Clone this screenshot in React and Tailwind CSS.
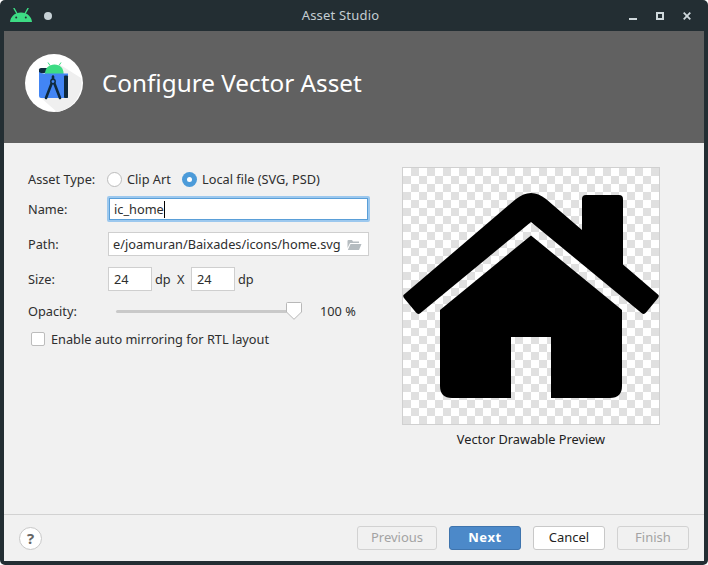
import React from "react";

function AndroidHead({ className }) {
  return (
    <svg className={className} viewBox="0 0 22 14" fill="#3ddc84">
      <path d="M0 14 C0.3 8.6 5 4.4 11 4.4 C17 4.4 21.7 8.6 22 14 Z" />
      <path d="M4 0.3 L7.2 6 M18 0.3 L14.8 6" stroke="#3ddc84" strokeWidth="1.4" strokeLinecap="round" />
      <circle cx="6.2" cy="9.6" r="1" fill="#232e33" />
      <circle cx="15.8" cy="9.6" r="1" fill="#232e33" />
    </svg>
  );
}

function StudioLogo() {
  return (
    <svg className="w-[58px] h-[58px] shrink-0" viewBox="0 0 58 58">
      <circle cx="29" cy="29" r="29" fill="#fff" />
      <path d="M34 10 L56 24 A29 29 0 0 1 32 58 L16 44 Z" fill="#efefef" />
      <path d="M14 20 L14 15.5 Q14 14 16 14 L24 14 L24 18 Z" fill="#0f2a3d" />
      <path d="M20 20 C20 14 24 10.5 29.5 10.5 C35 10.5 38.6 14 38.6 20 Z" fill="#3ddc84" />
      <path d="M23 8.5 L25 11.5 M36 8.5 L34 11.5" stroke="#3ddc84" strokeWidth="1" />
      <path d="M14 18 Q17 20 20 19.5 L43 19.5 L43 44 L16 44 Q14 44 14 42 Z" fill="#4285f4" />
      <path d="M39 22.5 Q39 21.5 40 21.5 L42 21.5 Q43 21.5 43 22.5 L43 43 Q43 44 42 44 L40 44 Q39 44 39 43 Z" fill="#0f2a3d" />
      <circle cx="28" cy="27.5" r="2.2" fill="none" stroke="#0f2a3d" strokeWidth="1.5" />
      <path d="M28 22.5 L28 25 M26.4 30 L21 44 M29.6 30 L35 44" stroke="#0f2a3d" strokeWidth="2.6" strokeLinecap="round" fill="none" />
    </svg>
  );
}

function House() {
  return (
    <svg className="w-[256px] h-[256px] block" viewBox="403 168 256 256" fill="#000">
      <path d="M403.5 295 Q402.8 296.5 404 298 L416 312.6 Q418 315 420.5 313 L531 222 L641.5 313 Q644 315 646 312.6 L658 298 Q659.2 296.5 658.5 295 L623 264.5 L623 199 Q623 195 619 195 L586 195 Q582 195 582 199 L582 230 L546 199 Q531 187 516 199 Z" />
      <path d="M531 235.5 L622 310 L622 386 Q622 398 610 398 L551 398 L551 337 L511 337 L511 398 L452 398 Q440 398 440 386 L440 310 Z" />
    </svg>
  );
}

function Btn({ children, kind }) {
  const base = "h-[24px] flex items-center justify-center rounded-[3px] border text-[13px] ";
  if (kind === "primary")
    return <div className={base + "w-[72px] bg-[#4c89c9] border-[#3f74ad] text-white font-bold tracking-[0.6px]"}>{children}</div>;
  if (kind === "normal")
    return <div className={base + "w-[72px] bg-white border-[#c8c8c8] text-[#1f1f1f]"}>{children}</div>;
  return <div className={base + "border-[#d2d2d2] text-[#a3a3a3] " + (children === "Previous" ? "w-[80px]" : "w-[72px]")}>{children}</div>;
}

export default function App() {
  return (
    <div className="w-[708px] h-[565px] bg-white overflow-hidden">
      <div className="w-full h-full bg-[#232e33] rounded-[5px] px-[4px] pb-[4px] flex flex-col font-['Noto_Sans','Open_Sans',sans-serif] text-[12.75px] text-[#2e2e2e] overflow-hidden">
        {/* Title bar */}
        <div className="h-[31px] shrink-0 flex items-center -mx-[4px] pl-[10px] pr-[17px] relative">
          <AndroidHead className="w-[22px] h-[14px] -mt-[1px]" />
          <div className="w-[8px] h-[8px] rounded-full bg-[#c7d1d6] ml-[12px]" />
          <div className="flex-1 text-center text-[13px] text-[#c3cdd2] tracking-[0.2px]">Asset Studio</div>
          <div className="flex items-center gap-[19px]">
            <svg className="w-[8px] h-[8px]" viewBox="0 0 8 8"><rect x="0" y="6" width="8" height="2" fill="#cfd8dc" /></svg>
            <svg className="w-[8px] h-[8px]" viewBox="0 0 8 8"><rect x="1" y="1" width="6" height="6" fill="none" stroke="#cfd8dc" strokeWidth="2" /></svg>
            <svg className="w-[8px] h-[8px]" viewBox="0 0 8 8"><path d="M0.7 0.7 L7.3 7.3 M7.3 0.7 L0.7 7.3" stroke="#cfd8dc" strokeWidth="1.8" /></svg>
          </div>
        </div>
        {/* Header */}
        <div className="h-[112px] shrink-0 bg-[#616161] flex items-center pl-[21px] pb-[8px]">
          <StudioLogo />
          <div className="ml-[19px] text-[24.3px] text-white leading-none">Configure Vector Asset</div>
        </div>
        {/* Body */}
        <div className="flex-1 bg-[#f1f1f1] flex flex-col min-h-0">
          <div className="h-[371px] shrink-0 flex pt-[24px] pl-[24px]">
            {/* Form */}
            <div className="w-[374px] shrink-0 flex flex-col">
              <div className="h-[25px] flex items-center">
                <div className="w-[79px]">Asset Type:</div>
                <div className="w-[15px] h-[15px] rounded-full bg-white border border-[#bcbcbc]" />
                <div className="ml-[5px] w-[50px]">Clip Art</div>
                <div className="w-[15px] h-[15px] rounded-full bg-[#4c9bd9] flex items-center justify-center ml-[5px]">
                  <div className="w-[5px] h-[5px] rounded-full bg-white" />
                </div>
                <div className="ml-[5px]">Local file (SVG, PSD)</div>
              </div>
              <div className="h-[26px] mt-[4px] flex items-center">
                <div className="w-[79px] pt-[2px]">Name:</div>
                <div className="w-[263px] h-[26px] bg-white border-2 border-[#9cc8ee] rounded-[2px] flex items-center pl-[5px] shadow-[inset_0_0_0_1px_#5a9fd8]">
                  <span className="pt-[2px]">ic_home</span>
                  <span className="inline-block w-px h-[17px] bg-black" />
                </div>
              </div>
              <div className="h-[24px] mt-[10px] flex items-center">
                <div className="w-[80px] pt-[2px]">Path:</div>
                <div className="w-[261px] h-[24px] bg-white border border-[#cfcfcf] flex items-center pl-[4px] pr-[6px] pt-[2px] justify-between">
                  <span className="whitespace-nowrap">e/joamuran/Baixades/icons/home.svg</span>
                  <svg className="w-[15px] h-[12px] shrink-0" viewBox="0 0 15 12">
                    <path d="M0.5 2 Q0.5 1 1.5 1 L5 1 L6 2.5 L12 2.5 L12 4 L3 4 L0.5 9 Z" fill="#b5bcc0" />
                    <path d="M3.5 5 L14.5 5 L12 11 L0.8 11 Z" fill="#b5bcc0" />
                  </svg>
                </div>
              </div>
              <div className="h-[24px] mt-[11px] flex items-center">
                <div className="w-[80px] pt-[2px]">Size:</div>
                <div className="w-[44px] h-[24px] bg-white border border-[#cfcfcf] flex items-center pl-[5px] pt-[2px]">24</div>
                <div className="ml-[3px] w-[22px] pt-[2px]">dp</div>
                <div className="w-[14px] pt-[2px]">X</div>
                <div className="w-[44px] h-[24px] bg-white border border-[#cfcfcf] flex items-center pl-[5px] pt-[2px]">24</div>
                <div className="ml-[3px] pt-[2px]">dp</div>
              </div>
              <div className="h-[24px] mt-[8px] flex items-center">
                <div className="w-[88px] pt-[2px]">Opacity:</div>
                <div className="w-[186px] h-[18px] relative flex items-center">
                  <div className="w-full h-[3px] bg-[#c9c9c9] rounded-full" />
                  <svg className="absolute right-0 top-0 w-[16px] h-[18px]" viewBox="0 0 16 18">
                    <path d="M1.5 0.5 L14.5 0.5 Q15.5 0.5 15.5 1.5 L15.5 10 L8 17.3 L0.5 10 L0.5 1.5 Q0.5 0.5 1.5 0.5 Z" fill="#fff" stroke="#b8b8b8" />
                  </svg>
                </div>
                <div className="ml-[18px] pt-[2px]">100 %</div>
              </div>
              <div className="h-[24px] mt-[4px] flex items-center pl-[3px]">
                <div className="w-[14px] h-[14px] bg-white border border-[#bcbcbc] rounded-[2px]" />
                <div className="ml-[6px] pt-[2px]">Enable auto mirroring for RTL layout</div>
              </div>
            </div>
            {/* Preview */}
            <div className="w-[258px] flex flex-col items-center">
              <div className="w-[258px] h-[258px] border border-[#d0d0d0] bg-[repeating-conic-gradient(#e0e0e0_0_25%,#fff_0_50%)] bg-[length:16px_16px]">
                <House />
              </div>
              <div className="mt-[5px] leading-[18px] text-[#222]">Vector Drawable Preview</div>
            </div>
          </div>
          {/* Footer */}
          <div className="flex-1 border-t border-[#d2d2d2] flex items-center pl-[15px] pr-[15px]">
            <div className="w-[23px] h-[23px] rounded-full bg-white border border-[#c8c8c8] flex items-center justify-center text-[15px] font-bold text-[#666]">?</div>
            <div className="ml-auto flex gap-[12px]">
              <Btn>Previous</Btn>
              <Btn kind="primary">Next</Btn>
              <Btn kind="normal">Cancel</Btn>
              <Btn>Finish</Btn>
            </div>
          </div>
        </div>
      </div>
    </div>
  );
}
